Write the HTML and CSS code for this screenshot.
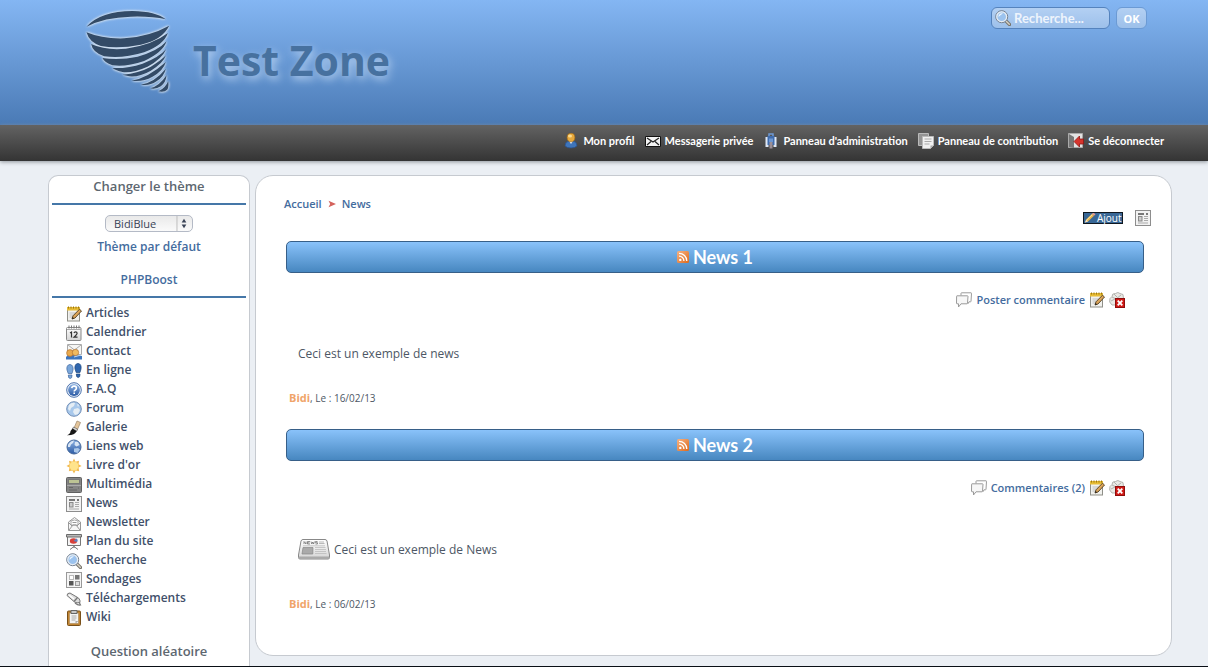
FILE: index.html
```html
<!DOCTYPE html>
<html lang="fr">
<head>
<meta charset="utf-8">
<title>Test Zone - News</title>
<link rel="stylesheet" href="styles.css">
</head>
<body>
<svg class="defs" aria-hidden="true">
  <defs>
    <linearGradient id="rssFill" x1="0" y1="0" x2="1" y2="1"><stop offset="0" stop-color="#f7b384"/><stop offset="1" stop-color="#dd6a1c"/></linearGradient>
    <linearGradient id="blueBall" x1="0" y1="0" x2="0" y2="1"><stop offset="0" stop-color="#8fb4e4"/><stop offset="1" stop-color="#2c5ba4"/></linearGradient>
    <linearGradient id="paper" x1="0" y1="0" x2="0" y2="1"><stop offset="0" stop-color="#fff"/><stop offset="1" stop-color="#d4d4d4"/></linearGradient>
    <symbol id="edit" viewBox="0 0 16 16">
      <rect x="1.500" y="2" width="12" height="13" fill="#f1f1ee" stroke="#8f8f88"/>
      <path d="M1 1h13v3.500H1z" fill="#e8bd35"/>
      <path d="M2.500 .5v2M5 .5v2M7.500 .5v2M10 .5v2M12.500 .5v2" stroke="#9b7510"/>
      <path d="M3.500 7h6M3.500 9h4M3.500 11h3" stroke="#c0c0c0"/>
      <path d="M6 13l1-3.200L13.500 3.200l2 1.800L9 12z" fill="#dca55a" stroke="#4d3a1d" stroke-width=".9"/>
      <path d="M6 13l.7-2 1.300 1.200z" fill="#222"/>
    </symbol>
    <symbol id="lens" viewBox="0 0 16 16">
      <path d="M10.500 10.500l4 4" stroke="#77736a" stroke-width="3.200" stroke-linecap="round"/>
      <path d="M11 11l3.300 3.300" stroke="#d8d4c8" stroke-width="1.400" stroke-linecap="round"/>
      <circle cx="6.700" cy="6.700" r="6" fill="#9cc3ee" stroke="#77808c"/>
      <circle cx="6.700" cy="6.700" r="4.900" fill="none" stroke="#e9edf1" stroke-width="1.200"/>
      <path d="M3.500 7A3.300 3.300 0 0 1 8 3.600Q5.600 5 3.500 7z" fill="#edf6ff"/>
    </symbol>
    <symbol id="paperIcon" viewBox="0 0 16 16">
      <rect x=".5" y=".5" width="15" height="15" fill="#f2f2f2" stroke="#8d8d8d"/>
      <path d="M3 4h6M11 4h2" stroke="#777" stroke-width="2"/>
      <rect x="3.500" y="6.500" width="3.500" height="4.500" fill="#ccc" stroke="#888"/>
      <path d="M9 6.500h4M9 8.500h4M9 10.500h4M3 13h10" stroke="#aaa"/>
    </symbol>
    <symbol id="rss" viewBox="0 0 12 12">
      <rect width="12" height="12" rx="1.500" fill="url(#rssFill)"/>
      <circle cx="3.300" cy="8.900" r="1.200" fill="#fff"/>
      <path d="M2 5.200A4.700 4.700 0 0 1 6.900 10M2 2.300A7.700 7.700 0 0 1 9.800 10" fill="none" stroke="#fff" stroke-width="1.300"/>
    </symbol>
    <symbol id="bubbles" viewBox="0 0 16 16">
      <path d="M5 3.500V1.300q0-.5.500-.5H15q.5 0 .5.500l-.5 8q0 .5-.5.500H13l-1 2" fill="#fff" stroke="#9b9b9b"/>
      <path d="M1 3.800h10.500q.5 0 .5.500l-.5 7q0 .5-.5.500H5L2.500 15v-3.200H1q-.5 0-.5-.5l.1-7q0-.5.400-.5z" fill="#f7f7f7" stroke="#9b9b9b"/>
    </symbol>
    <symbol id="remove" viewBox="0 0 16 16">
      <path d="M.7 10Q0 6 3 4.500 3 1 6.500 1.500 9-.5 11 1.500l3 1 .5 4L13 13H3z" fill="#e9e9e5" stroke="#a3a39e" stroke-width=".8"/>
      <path d="M3 5l4 2 5-4M2 9l4-2M5 2l3 3" fill="none" stroke="#b2b2ad"/>
      <rect x="6.500" y="6.500" width="9" height="9" fill="#d01a16" stroke="#8e0d0b"/>
      <path d="M8.700 8.700l4.600 4.600M13.300 8.700l-4.600 4.600" stroke="#fff" stroke-width="1.900"/>
    </symbol>
  </defs>
</svg>

<header class="header">
  <div class="wrap header-row">
    <a class="brand" href="#">
      <svg class="brand-logo" viewBox="45 25 260 255" aria-hidden="true">
        <g fill="#334b67">
          <path d="M52 78Q95 31 190 31 260 32 290 56 245 46 185 48 105 50 52 78z"/>
          <path d="M52 95Q100 115 165 113 240 108 300 75 280 117 215 132 150 145 95 136 60 125 52 95z"/>
          <path d="M66 130Q110 150 170 144 250 133 296 97 285 132 225 155 160 175 105 167 70 155 66 130z"/>
          <path d="M100 172Q150 180 205 168 265 152 292 122 282 155 225 181 170 200 130 194 105 185 100 172z"/>
          <path d="M130 202Q175 204 220 189 270 170 291 145 280 174 235 198 190 218 160 214 140 210 130 202z"/>
          <path d="M160 222Q210 217 245 198 275 180 290 164 283 187 245 210 210 230 180 227z"/>
          <path d="M187 240Q235 233 290 184 282 211 250 228 220 245 187 240z"/>
          <path d="M215 252Q255 246 290 204 285 227 262 242 240 257 215 252z"/>
          <path d="M243 263Q270 257 292 224 290 246 275 257 260 267 243 263z"/>
          <path d="M268 272Q289 262 297 242 300 258 294 267 285 276 268 272z"/>
        </g>
      </svg>
      <span class="brand-name">Test Zone</span>
    </a>
    <form class="search">
      <label class="search-field"><svg class="icon" aria-hidden="true"><use href="#lens"/></svg><input class="search-input" type="text" placeholder="Recherche..." aria-label="Recherche"></label>
      <button class="search-button" type="button">OK</button>
    </form>
  </div>
</header>

<nav class="topbar">
  <div class="wrap topbar-row">
    <a class="topbar-link" href="#"><svg class="icon" viewBox="0 0 16 16" aria-hidden="true"><path d="M2 13Q2 8.500 6 8h4q4 .5 4 5Q12 15 8 15T2 13z" fill="#3f75ba" stroke="#26508c" stroke-width=".7"/><path d="M6 8l2 3 2-3z" fill="#e8eef8"/><ellipse cx="8" cy="4.500" rx="3.900" ry="4.300" fill="#e6a83c" stroke="#9d6716" stroke-width=".6"/><ellipse cx="7" cy="3" rx="2" ry="1.500" fill="#fadb91"/></svg>Mon profil</a>
    <a class="topbar-link" href="#"><svg class="icon" viewBox="0 0 16 16" aria-hidden="true"><path d="M.5 3.500h15v10H.5z" fill="#f4f4f4" stroke="#111"/><path d="M2 5l6 4 6-4M2 12l4-3.500M14 12l-4-3.500" fill="none" stroke="#222" stroke-width="1.200"/></svg>Messagerie privée</a>
    <a class="topbar-link" href="#"><svg class="icon" viewBox="0 0 16 16" aria-hidden="true"><path d="M2.500 4h3v10h-3zM10.500 4h3v10h-3z" fill="#dfe8f5"/><path d="M4.500 3h7v9h-7z" fill="#3f6cae"/><path d="M6 3V1h4v2" fill="none" stroke="#6f9ad6" stroke-width="1.500"/><path d="M6 5.500h4V9H6z" fill="#6c97d2"/><path d="M6.500 9h3v6.500h-3z" fill="#9c8f96"/></svg>Panneau d'administration</a>
    <a class="topbar-link" href="#"><svg class="icon" viewBox="0 0 16 16" aria-hidden="true"><path d="M.5.500h10v12H.5z" fill="#949494" stroke="#bababa"/><path d="M4.500 3.500h11v9l-3 3h-8z" fill="#f1f1f1" stroke="#bbb"/><path d="M6.500 6h7M6.500 8.500h7M6.500 11h5" stroke="#aaa"/><path d="M12.500 15.500v-3h3z" fill="#aaa"/></svg>Panneau de contribution</a>
    <a class="topbar-link" href="#"><svg class="icon" viewBox="0 0 16 16" aria-hidden="true"><path d="M.5.500h14v14H.5z" fill="#e2e2e2" stroke="#aaa"/><path d="M1 1l5 3v11l-5-1z" fill="#777"/><path d="M6 8.500l5.500-5.500v3h4v5h-4v3z" fill="#d6342d" stroke="#8e1714" stroke-width=".8"/></svg>Se déconnecter</a>
  </div>
</nav>

<div class="wrap columns">
  <aside class="sidebar">
    <section>
      <h2 class="side-title">Changer le thème</h2>
      <div class="theme">
        <div class="select-box">
          <select class="select" aria-label="Thème"><option>BidiBlue</option></select>
          <svg class="select-arrows" viewBox="0 0 16 16" aria-hidden="true"><path d="M.5 0v16" stroke="#bbb"/><path d="M5.500 7L8 3l2.500 4zM5.500 9L8 13l2.500-4z" fill="#3a4357"/></svg>
        </div>
        <a class="theme-link" href="#">Thème par défaut</a>
      </div>
    </section>
    <section>
      <h2 class="side-title side-title-link"><a href="#">PHPBoost</a></h2>
      <ul class="menu">
        <li><a href="#"><svg class="icon" aria-hidden="true"><use href="#edit"/></svg>Articles</a></li>
        <li><a href="#"><svg class="icon" viewBox="0 0 16 16" aria-hidden="true"><rect x=".5" y="2.500" width="14.500" height="13" rx="1" fill="url(#paper)" stroke="#888"/><path d="M1 4.500h14" stroke="#aaa"/><path d="M3 .5v3M5.500 .5v3M8 .5v3M10.500 .5v3M13 .5v3" stroke="#777"/><path d="M4 8l1.500-1v5.500M8 8q.3-1.200 1.500-1.200 1.600 0 1.600 1.400 0 1-3.100 3.900h3.500" fill="none" stroke="#333" stroke-width="1.200"/></svg>Calendrier</a></li>
        <li><a href="#"><svg class="icon" viewBox="0 0 16 16" aria-hidden="true"><path d="M1.500.5h14v10h-14z" fill="#f6f6f4" stroke="#aaa"/><path d="M2 1l6.500 5L15 1" fill="none" stroke="#aaa"/><path d="M0 13q1-2 4-2h8l4 1v3.500H0z" fill="#3d75bd"/><circle cx="4" cy="9" r="3.400" fill="#e9a94c" stroke="#a9662a" stroke-width=".6"/><circle cx="9.500" cy="8.500" r="3.200" fill="#f0ba5f" stroke="#a9662a" stroke-width=".6"/><path d="M8 13l7-2" stroke="#bcd6f2"/></svg>Contact</a></li>
        <li><a href="#"><svg class="icon" viewBox="0 0 16 16" aria-hidden="true"><path d="M4 1.500c2.500 0 3.500 3 3 5.500L6 10.500H2.200L1 7C.4 4 1.500 1.500 4 1.500zM2.300 12H6q.2 3.500-1.800 3.500T2.300 12z" fill="#79a6da" stroke="#42699f" stroke-width=".7"/><path d="M12 .5c2.500 0 3.600 2.500 3 5.500l-1 3.500h-3.800L9 6C8.500 3 9.500.5 12 .5zM10.300 11H14q.2 3.500-1.800 3.500T10.300 11z" fill="#2f66ae" stroke="#1f477e" stroke-width=".7"/></svg>En ligne</a></li>
        <li><a href="#"><svg class="icon" viewBox="0 0 16 16" aria-hidden="true"><circle cx="8" cy="8" r="7.300" fill="#eef3fa" stroke="#4c72ad"/><circle cx="8" cy="8" r="5.900" fill="url(#blueBall)"/><path d="M5.700 6.200Q6 4 8.200 4q2.300.2 2.200 2.100 0 1.200-1.200 1.900-1 .5-1 1.500M8.200 10.500V12" fill="none" stroke="#fff" stroke-width="1.600"/></svg>F.A.Q</a></li>
        <li><a href="#"><svg class="icon" viewBox="0 0 16 16" aria-hidden="true"><circle cx="8" cy="8" r="7.300" fill="#a8c8eb" stroke="#728fb7"/><path d="M3 4q3-3 6-2l-1 3-3 2-1 3-2-2zM8 8l4-1 2 2-2 4-3 1-2-3zM11 3l2 1-1 2z" fill="#e5edf4"/></svg>Forum</a></li>
        <li><a href="#"><svg class="icon" viewBox="0 0 16 16" aria-hidden="true"><path d="M8 8l3-7 3.500 1.500-3.500 8z" fill="#e4c59b" stroke="#9a8468" stroke-width=".7"/><path d="M7.500 7l4 2-1 2.500-4-2.500z" fill="#d6d6d6" stroke="#555" stroke-width=".6"/><path d="M6.500 8.500l4 2.500Q9 15.500 1 15.300 4.500 14 4.500 11z" fill="#181818"/></svg>Galerie</a></li>
        <li><a href="#"><svg class="icon" viewBox="0 0 16 16" aria-hidden="true"><circle cx="8" cy="8" r="7" fill="url(#blueBall)" stroke="#47699b"/><path d="M2 6q2-4 6-4.500L7 4 5 5.500 4 8 2 8zM9 3l3 0 1.500 3-3 1.500L8.500 6z" fill="#d9e6f5"/><path d="M8 9.500l4-.5 2 1.500L11.500 14 8 13z" fill="#a9c6e8"/></svg>Liens web</a></li>
        <li><a href="#"><svg class="icon" viewBox="0 0 16 16" aria-hidden="true"><path d="M8 .5l1.500 3.200L13 2.800l-.5 3.500L15.600 8l-3.100 1.600.7 3.600-3.600-.8L8 15.600l-1.600-3.200-3.600.8.700-3.600L.5 8l3.100-1.700L3 2.800l3.500.9z" fill="#f2ba50"/><circle cx="8" cy="8" r="4.500" fill="#ffe48c"/></svg>Livre d'or</a></li>
        <li><a href="#"><svg class="icon" viewBox="0 0 16 16" aria-hidden="true"><rect x=".5" y=".5" width="15" height="15" rx="1" fill="#858585" stroke="#606060"/><rect x="2.500" y="2.500" width="11" height="4" fill="#bcc394" stroke="#777"/><path d="M1 8.500h14" stroke="#aaa"/><path d="M3 10.500h4M3 13h8M12 11h1" stroke="#666"/></svg>Multimédia</a></li>
        <li><a href="#"><svg class="icon" aria-hidden="true"><use href="#paperIcon"/></svg>News</a></li>
        <li><a href="#"><svg class="icon" viewBox="0 0 16 16" aria-hidden="true"><path d="M2.500 7L8.500 2.500 14.500 7v8.500h-12z" fill="#f7f7f7" stroke="#999"/><path d="M5 6q3.500-2 7 0v4H5z" fill="#fff" stroke="#aaa"/><path d="M3 15l4-5h3l4 5M3 8l3 3M14 8l-3 3M6.500 7.500h4" fill="none" stroke="#999"/></svg>Newsletter</a></li>
        <li><a href="#"><svg class="icon" viewBox="0 0 16 16" aria-hidden="true"><path d="M4 15.500l4-3 4 3M8 11v3" fill="none" stroke="#777"/><path d="M1.500 2h13v9.500h-13z" fill="#f5f5f5" stroke="#777"/><path d="M.5.500h15V3H.5z" fill="#b8b8b8" stroke="#6c6c6c"/><ellipse cx="7.500" cy="7" rx="3.700" ry="2.800" fill="#d8403a"/><path d="M7.500 7l3-2.500q2 1.500.5 3.500z" fill="#5d82c0"/></svg>Plan du site</a></li>
        <li><a href="#"><svg class="icon" aria-hidden="true"><use href="#lens"/></svg>Recherche</a></li>
        <li><a href="#"><svg class="icon" viewBox="0 0 16 16" aria-hidden="true"><rect x=".5" y=".5" width="15" height="15" fill="#f5f5f5" stroke="#999"/><rect x="3.500" y="3.500" width="4" height="4" fill="#fff" stroke="#bbb"/><rect x="9" y="3" width="4.500" height="4.500" fill="#777"/><rect x="3" y="9" width="4.500" height="4.500" fill="#555"/><rect x="9.500" y="9.500" width="4" height="4" fill="#ddd" stroke="#999"/></svg>Sondages</a></li>
        <li><a href="#"><svg class="icon" viewBox="0 0 16 16" aria-hidden="true"><path d="M9 12q3 2.500 5.500 2l-1.500-3" fill="none" stroke="#777" stroke-width="1.200"/><path d="M1 4.500Q1 2 4 2l8.500 5q2 2 1.500 4.500-3 1-5.500-.5z" fill="#dcdcdc" stroke="#777"/><path d="M8 10.500l3.500-4" stroke="#777" stroke-width="1.300"/><path d="M3 4l5 4" stroke="#fff" stroke-width="1.400"/></svg>Téléchargements</a></li>
        <li><a href="#"><svg class="icon" viewBox="0 0 16 16" aria-hidden="true"><rect x="1.500" y="1" width="13" height="14.500" rx="1" fill="#c18431" stroke="#79501a"/><path d="M3.500 3h9v10.500h-9z" fill="#f4f4f4" stroke="#a98755" stroke-width=".6"/><path d="M5 .5h6v3H5z" fill="#c6c6c6" stroke="#666"/><path d="M5.500 6h5M5.500 8h5M5.500 10h4" stroke="#aaa"/><path d="M9.500 13.500V11h3z" fill="#aaa"/></svg>Wiki</a></li>
      </ul>
    </section>
    <section>
      <h2 class="side-title side-title-last">Question aléatoire</h2>
    </section>
  </aside>

  <main class="main">
    <div class="crumbs">
      <a href="#">Accueil</a>
      <svg class="crumb-arrow" viewBox="0 0 8 8" aria-hidden="true"><path d="M.5 .8L8 4 .5 7.200 2.200 4z" fill="#d4625c"/></svg>
      <a href="#">News</a>
    </div>
    <div class="tools">
      <a class="add" href="#"><svg class="add-icon" viewBox="0 0 12 10" aria-hidden="true"><path d="M1 9.500L2.200 6.500 8 .8l2 2L4 8.500z" fill="#eab64c"/><path d="M2.800 7L8.500 1.400" stroke="#fbe3a2"/><path d="M8 .8L9.500-.5l2 2L10 2.800z" fill="#e79b90"/><path d="M1 9.500l1.200-3L4 8.500z" fill="#f3e2c8"/></svg>Ajout</a>
      <a class="tool-link" href="#" aria-label="News"><svg class="icon" aria-hidden="true"><use href="#paperIcon"/></svg></a>
    </div>

    <article class="news">
      <h1 class="news-title"><svg class="rss" aria-hidden="true"><use href="#rss"/></svg>News 1</h1>
      <div class="news-actions">
        <a class="comment-link" href="#"><svg class="icon" aria-hidden="true"><use href="#bubbles"/></svg>Poster commentaire</a>
        <a class="tool-link" href="#" aria-label="Modifier"><svg class="icon" aria-hidden="true"><use href="#edit"/></svg></a>
        <a class="tool-link" href="#" aria-label="Supprimer"><svg class="icon" aria-hidden="true"><use href="#remove"/></svg></a>
      </div>
      <p class="news-text">Ceci est un exemple de news</p>
      <p class="news-meta"><a class="author" href="#">Bidi</a>, Le : 16/02/13</p>
    </article>

    <article class="news">
      <h1 class="news-title"><svg class="rss" aria-hidden="true"><use href="#rss"/></svg>News 2</h1>
      <div class="news-actions">
        <a class="comment-link" href="#"><svg class="icon" aria-hidden="true"><use href="#bubbles"/></svg>Commentaires (2)</a>
        <a class="tool-link" href="#" aria-label="Modifier"><svg class="icon" aria-hidden="true"><use href="#edit"/></svg></a>
        <a class="tool-link" href="#" aria-label="Supprimer"><svg class="icon" aria-hidden="true"><use href="#remove"/></svg></a>
      </div>
      <p class="news-text news-text-picture">
        <svg class="picture" viewBox="0 0 32 22" aria-hidden="true"><path d="M5 1.500h22q1.500 0 2 1.500l2.500 14v2.500q0 1.500-1.500 1.500H2q-1.500 0-1.500-1.500V17L3 3q.5-1.500 2-1.500z" fill="url(#paper)" stroke="#888"/><path d="M1 18.500h30v1.500q0 1-1 1H2q-1 0-1-1z" fill="#aaa"/><path d="M6 6V3.500l2 2.500V3.500M12 3.500H9.500V6H12M9.500 4.800h2M13 3.500l.8 2.500.9-2 .9 2 .8-2.500M19.500 3.500h-2v1.200h2V6h-2" fill="none" stroke="#666" stroke-width=".7"/><path d="M21 4h5M21 5.500h5.500" stroke="#aaa" stroke-width=".8"/><path d="M5 9.500h10l-.2 6.500H4z" fill="#aaa" stroke="#888" stroke-width=".7"/><path d="M17 9.500h10.500M17 11.500h11M17 13.500h11M17 15.500h11.500M5 7.800h22" stroke="#bbb" stroke-width=".8"/></svg>
        Ceci est un exemple de News
      </p>
      <p class="news-meta"><a class="author" href="#">Bidi</a>, Le : 06/02/13</p>
    </article>
  </main>
</div>
</body>
</html>
```

FILE: styles.css
```css
* { box-sizing: border-box; }

body {
  margin: 0;
  min-height: 100vh;
  display: flex;
  flex-direction: column;
  background: #ebeff4;
  border-bottom: 1px solid #0a0f16;
  color: #4d5765;
  font-family: "Trebuchet MS", "Open Sans", sans-serif;
  font-size: 12px;
  line-height: 19px;
}

a { color: #446c9e; text-decoration: none; }
h1, h2, p, ul { margin: 0; padding: 0; }

.defs { position: absolute; width: 0; height: 0; }
.icon { width: 16px; height: 16px; flex: none; display: block; }
.wrap { margin: 0 36px 0 48px; }

.header {
  height: 125px;
  background: linear-gradient(#84b6f3, #4a7ab5);
}
.header-row {
  display: flex;
  justify-content: space-between;
  align-items: flex-start;
  padding: 7px 25px 0 36px;
}
.brand {
  display: flex;
  align-items: flex-start;
  gap: 22px;
  padding-top: 2px;
}
.brand-logo {
  width: 87px;
  height: 85px;
  overflow: visible;
  filter: drop-shadow(0 0 1px #d5e2f0) drop-shadow(0 0 1px #d5e2f0);
}
.brand-name {
  padding-top: 21px;
  color: #47719f;
  font-size: 41px;
  font-weight: 700;
  line-height: 60px;
  text-shadow: 2px 3px 8px #b5cfee;
}
.search { display: flex; gap: 6px; }
.search-field {
  display: flex;
  align-items: center;
  gap: 3px;
  width: 119px;
  height: 22px;
  padding: 0 3px;
  border: 1px solid #5583bd;
  border-radius: 6px;
  background: linear-gradient(#b3d0f3, #9dc0ea);
}
.search-input {
  flex: 1;
  min-width: 0;
  padding: 0;
  border: 0;
  outline: 0;
  background: transparent;
  color: #eef4fc;
  font: 700 13px "Trebuchet MS", Lato, sans-serif;
}
.search-input::placeholder { color: #eef4fc; opacity: 1; }
.search-button {
  width: 31px;
  height: 22px;
  padding: 0;
  border: 1px solid #6b9ad4;
  border-radius: 6px;
  background: linear-gradient(#b3d0f3, #9dc0ea);
  color: #fff;
  font: 700 11px "Trebuchet MS", "Open Sans", sans-serif;
}

.topbar {
  height: 36px;
  background: linear-gradient(#636363, #343434);
  box-shadow: 0 1px 4px #8d9399;
}
.topbar-row {
  display: flex;
  justify-content: flex-end;
  gap: 10px;
  padding: 6px 8px 0 0;
}
.topbar-link {
  display: flex;
  align-items: center;
  gap: 4px;
  color: #fff;
  font-family: "Trebuchet MS", Lato, sans-serif;
  font-size: 11px;
  font-weight: 700;
}

.columns {
  flex: 1;
  display: flex;
  gap: 5px;
  padding-top: 14px;
}

.sidebar {
  flex: none;
  width: 202px;
  padding: 0 3px;
  border: 1px solid #c6cad0;
  border-bottom: 0;
  border-radius: 10px 10px 0 0;
  background: #fff;
  text-align: center;
}
.side-title {
  padding: 1px 0 7px;
  border-bottom: 2px solid #4577a8;
  color: #5d6770;
  font-size: 13px;
  font-weight: 600;
  line-height: 19px;
}
.side-title-link { font-size: 12px; padding: 3px 0 7px; }
.side-title-last { border-bottom: 0; padding: 6px 0 5px; }
.theme { padding: 10px 0 11px; }
.select-box {
  position: relative;
  width: 88px;
  height: 17px;
  margin: 0 auto 5px;
}
.select {
  display: block;
  width: 100%;
  height: 100%;
  padding: 0 20px 0 8px;
  appearance: none;
  border: 1px solid #b4bac6;
  border-radius: 5px;
  background: linear-gradient(#e9e9e9, #fafafa);
  color: #3a4357;
  font: 11px/15px "Trebuchet MS", "Open Sans", sans-serif;
}
.select-arrows {
  position: absolute;
  top: 1px;
  right: 1px;
  width: 16px;
  height: 15px;
  pointer-events: none;
}
.theme-link { display: block; font-weight: 600; }
.menu {
  padding: 5px 0 10px 14px;
  list-style: none;
  text-align: left;
}
.menu a {
  display: flex;
  align-items: center;
  gap: 4px;
  height: 19px;
  color: #41506a;
  font-weight: 600;
}
.menu .icon { margin-top: 2px; }

.main {
  flex: 1;
  min-width: 0;
  margin-bottom: 10px;
  padding: 18px 27px 0 28px;
  border: 1px solid #c6cad0;
  border-radius: 18px;
  background: #fff;
}
.crumbs {
  display: flex;
  align-items: center;
  gap: 6px;
  font-size: 11px;
  font-weight: 600;
}
.crumb-arrow { width: 8px; height: 8px; }
.tools {
  display: flex;
  justify-content: flex-end;
  align-items: center;
  gap: 12px;
  height: 16px;
  margin: -3px -7px 15px 0;
}
.add {
  display: flex;
  align-items: center;
  gap: 1px;
  width: 40px;
  height: 12px;
  border: 1px solid #101820;
  background: #386796;
  color: #fff;
  font-size: 10px;
  line-height: 10px;
}
.add-icon { width: 12px; height: 10px; flex: none; }

.news { padding: 0 0 21px 2px; }
.news-title {
  display: flex;
  justify-content: center;
  align-items: center;
  gap: 4px;
  height: 32px;
  border: 1px solid #375f88;
  border-radius: 5px;
  background: linear-gradient(#89c2fa, #4787c0);
  color: #fff;
  font-family: "Trebuchet MS", Lato, sans-serif;
  font-size: 18px;
  font-weight: 700;
}
.rss { width: 12px; height: 12px; }
.news-actions {
  display: flex;
  justify-content: flex-end;
  align-items: center;
  gap: 4px;
  margin: 17px 19px 35px 0;
}
.comment-link {
  display: flex;
  align-items: center;
  gap: 4px;
  font-size: 11px;
  font-weight: 600;
}
.news-text { margin: 0 12px 25px 12px; }
.news-text-picture {
  display: flex;
  align-items: center;
  gap: 4px;
  height: 34px;
  margin-bottom: 28px;
}
.picture { width: 32px; height: 22px; }
.news-meta { padding-left: 3px; font-size: 10px; }
.author { color: #f0a46a; font-size: 11px; font-weight: 700; }
```
